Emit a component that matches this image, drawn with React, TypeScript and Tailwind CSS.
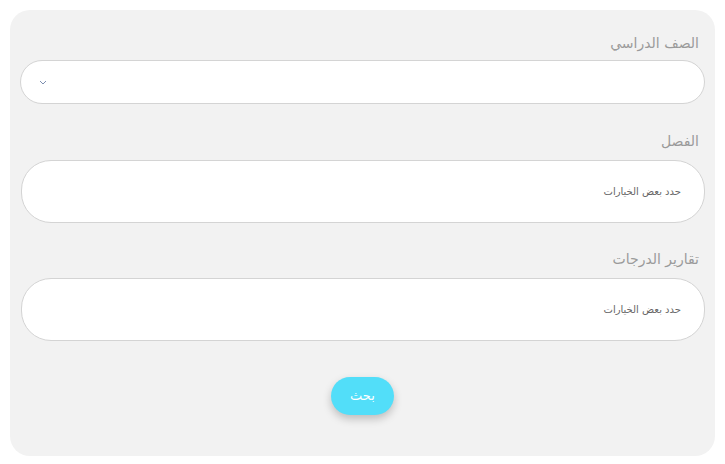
import React from 'react';

const FONT = { fontFamily: '"DejaVu Sans", "Noto Sans", sans-serif' };

const Label: React.FC<{ text: string; className?: string }> = ({ text, className }) => (
  <div className={`h-[20px] pr-[16px] text-[14px] leading-[20px] text-[#9a9a9a] ${className ?? ''}`}>{text}</div>
);

const MultiBox: React.FC = () => (
  <div className="h-[63px] mr-[10px] ml-[11px] rounded-[30px] border border-[#d4d4d4] bg-white flex items-center pr-[23px]">
    <span className="text-[10px] text-[#666]">حدد بعض الخيارات</span>
  </div>
);

export default function App() {
  return (
    <div dir="rtl" style={FONT} className="w-[725px] h-[464px] bg-white pt-[10px] px-[10px]">
      <div className="h-[446px] rounded-[20px] bg-[#f2f2f2] pt-[23px]">
        <Label text="الصف الدراسي" />
        <div className="mt-[7px] h-[44px] mx-[10px] rounded-[22px] border border-[#d4d4d4] bg-white flex items-center justify-end pl-[18px]">
          <svg width="8" height="5" viewBox="0 0 8 5" fill="none">
            <path d="M1 1l3 3 3-3" stroke="#7d8fb0" strokeWidth="1" />
          </svg>
        </div>
        <Label text="الفصل" className="mt-[27px]" />
        <div className="mt-[9px]">
          <MultiBox />
        </div>
        <Label text="تقارير الدرجات" className="mt-[26px]" />
        <div className="mt-[9px]">
          <MultiBox />
        </div>
        <div className="mt-[36px] flex justify-center">
          <button className="w-[63px] h-[38px] rounded-full bg-[#52def9] text-white text-[13px] shadow-[0_4px_8px_rgba(0,0,0,0.22)]">
            بحث
          </button>
        </div>
      </div>
    </div>
  );
}
